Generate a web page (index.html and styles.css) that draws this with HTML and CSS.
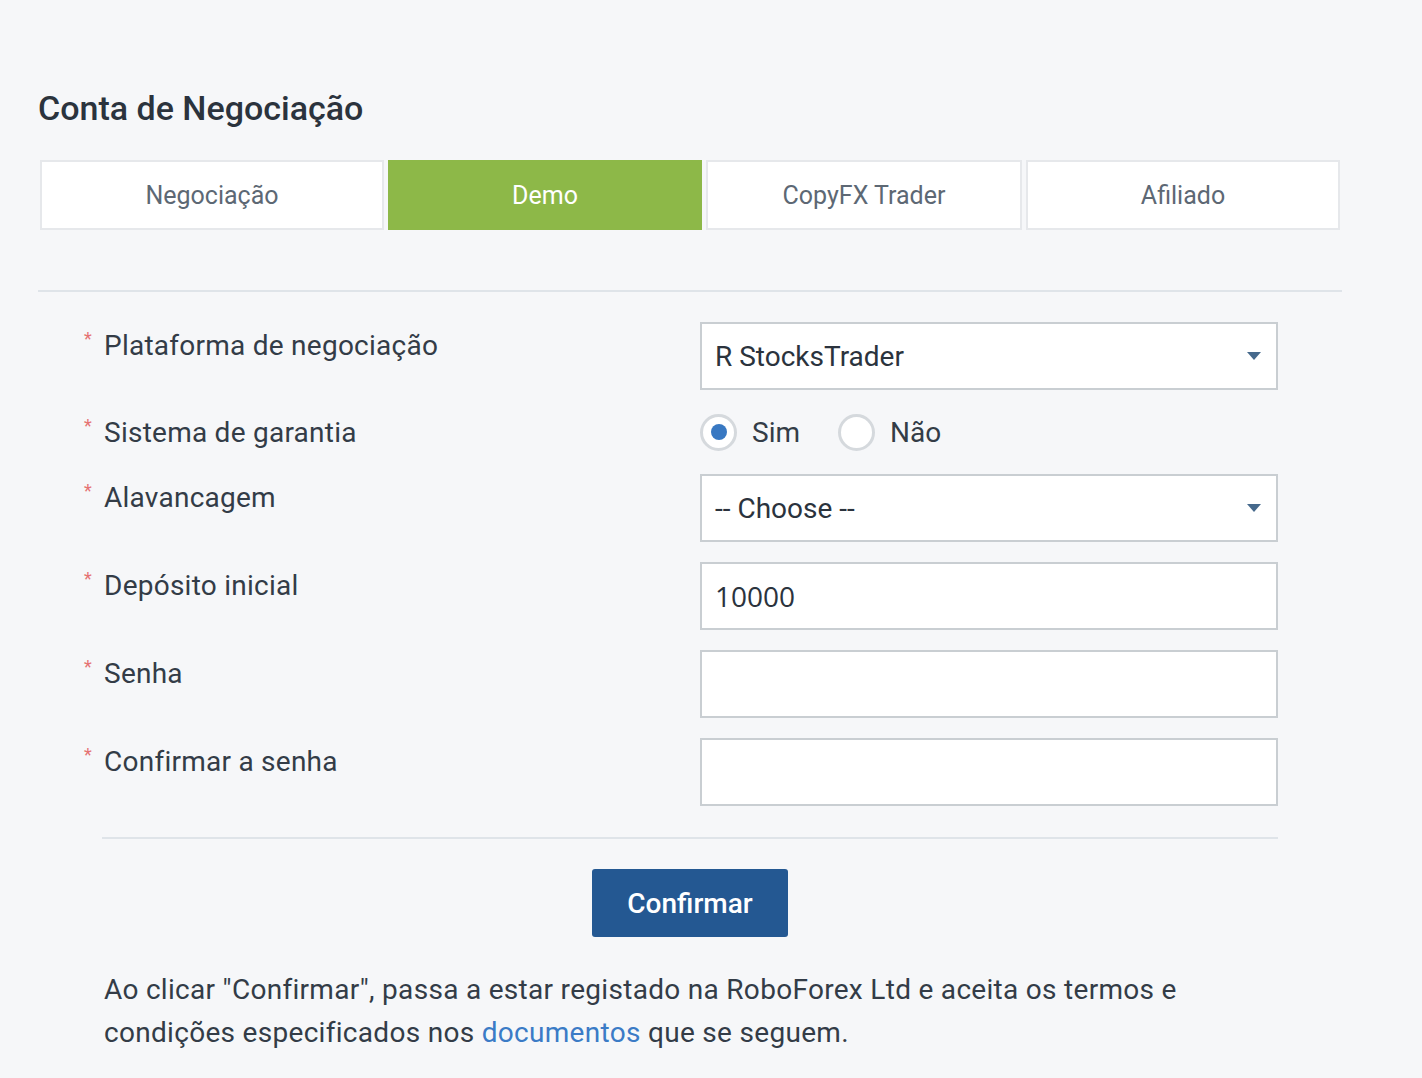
FILE: index.html
```html
<!DOCTYPE html>
<html>
<head>
    <title>Conta de Negociação</title>
    <link rel="stylesheet" href="styles.css">
</head>
<body>
<div class="page">
    <h1 class="title">Conta de Negociação</h1>

    <div class="tabs">
        <div class="tab">Negociação</div>
        <div class="tab tab-active">Demo</div>
        <div class="tab">CopyFX Trader</div>
        <div class="tab">Afiliado</div>
    </div>

    <div class="divider"></div>

    <form class="form">
        <div class="row">
            <label class="label"><span class="req">*</span>Plataforma de negociação</label>
            <div class="select">R StocksTrader<span class="caret"></span></div>
        </div>
        <div class="row row-radio">
            <label class="label"><span class="req">*</span>Sistema de garantia</label>
            <div class="radios">
                <span class="radio radio-on"></span><span class="radio-text">Sim</span>
                <span class="radio"></span><span class="radio-text">Não</span>
            </div>
        </div>
        <div class="row">
            <label class="label"><span class="req">*</span>Alavancagem</label>
            <div class="select">-- Choose --<span class="caret"></span></div>
        </div>
        <div class="row">
            <label class="label"><span class="req">*</span>Depósito inicial</label>
            <div class="input input-value">10000</div>
        </div>
        <div class="row">
            <label class="label"><span class="req">*</span>Senha</label>
            <div class="input"></div>
        </div>
        <div class="row">
            <label class="label"><span class="req">*</span>Confirmar a senha</label>
            <div class="input"></div>
        </div>

        <div class="form-sep"></div>

        <div class="actions">
            <button type="button" class="btn">Confirmar</button>
        </div>
    </form>

    <p class="note">Ao clicar "Confirmar", passa a estar registado na RoboForex Ltd e aceita os termos e<br>
        condições especificados nos <a href="#">documentos</a> que se seguem.</p>
</div>
</body>
</html>
```

FILE: styles.css
```css
body {
    margin: 0;
    background: #f6f7f9;
    font-family: Roboto, "Open Sans", sans-serif;
    color: #333c47;
}

.page {
    width: 1304px;
    padding: 86px 0 0 38px;
}

.title {
    margin: 0 0 30px;
    font-size: 34px;
    line-height: 44px;
    font-weight: 500;
    color: #2b333d;
}

.tabs {
    display: grid;
    grid-template-columns: 344px 314px 316px 314px;
    gap: 4px;
    margin-left: 2px;
}

.tab {
    height: 70px;
    box-sizing: border-box;
    border: 2px solid #e6e8eb;
    background: #fff;
    display: flex;
    align-items: center;
    justify-content: center;
    font-size: 25px;
    color: #5d6874;
}

.tab-active {
    background: #8db848;
    border-color: #8db848;
    color: #fff;
}

.divider {
    height: 2px;
    background: #dfe4e9;
    margin-top: 60px;
}

.form {
    padding: 30px 0 0 46px;
}

.row {
    display: grid;
    grid-template-columns: 616px 578px;
    margin-bottom: 20px;
}

.label {
    padding-top: 4px;
    line-height: 40px;
    font-size: 28px;
    letter-spacing: 0.25px;
    color: #333c47;
    display: flex;
}

.req {
    width: 20px;
    font-size: 18px;
    line-height: 26px;
    color: #e57373;
}

.select,
.input {
    height: 68px;
    box-sizing: border-box;
    border: 2px solid #c9ced2;
    background: #fff;
    padding: 0 13px;
    display: flex;
    align-items: center;
    font-size: 28px;
    color: #2b333d;
}

.select {
    justify-content: space-between;
}

.caret {
    width: 0;
    height: 0;
    border-left: 7px solid transparent;
    border-right: 7px solid transparent;
    border-top: 8px solid #46698c;
    margin-right: 2px;
}

.input-value {
    font-family: "Open Sans", sans-serif;
}

.row-radio {
    min-height: 44px;
}

.row-radio .label {
    padding-top: 3px;
}

.radios {
    display: flex;
    align-items: center;
}

.radio {
    width: 37px;
    height: 37px;
    box-sizing: border-box;
    border: 3px solid #d5d9dd;
    border-radius: 50%;
    background: #fff;
    display: flex;
    align-items: center;
    justify-content: center;
}

.radio-on::after {
    content: "";
    width: 16px;
    height: 16px;
    border-radius: 50%;
    background: #3878c2;
}

.radio-text {
    font-size: 28px;
    margin: 0 38px 0 15px;
}

.form-sep {
    height: 2px;
    background: #dfe4e9;
    width: 1176px;
    margin: 31px 0 30px 18px;
}

.actions {
    width: 1176px;
    margin-left: 18px;
    display: flex;
    justify-content: center;
}

.btn {
    width: 196px;
    height: 68px;
    border: 0;
    border-radius: 3px;
    background: #245892;
    color: #fff;
    font-family: Roboto, "Open Sans", sans-serif;
    font-size: 28px;
    font-weight: 500;
}

.note {
    margin: 31px 0 0 66px;
    font-size: 28px;
    line-height: 43px;
    letter-spacing: 0.3px;
    color: #333c47;
}

.note a {
    color: #3b7bc6;
    text-decoration: none;
}
```
